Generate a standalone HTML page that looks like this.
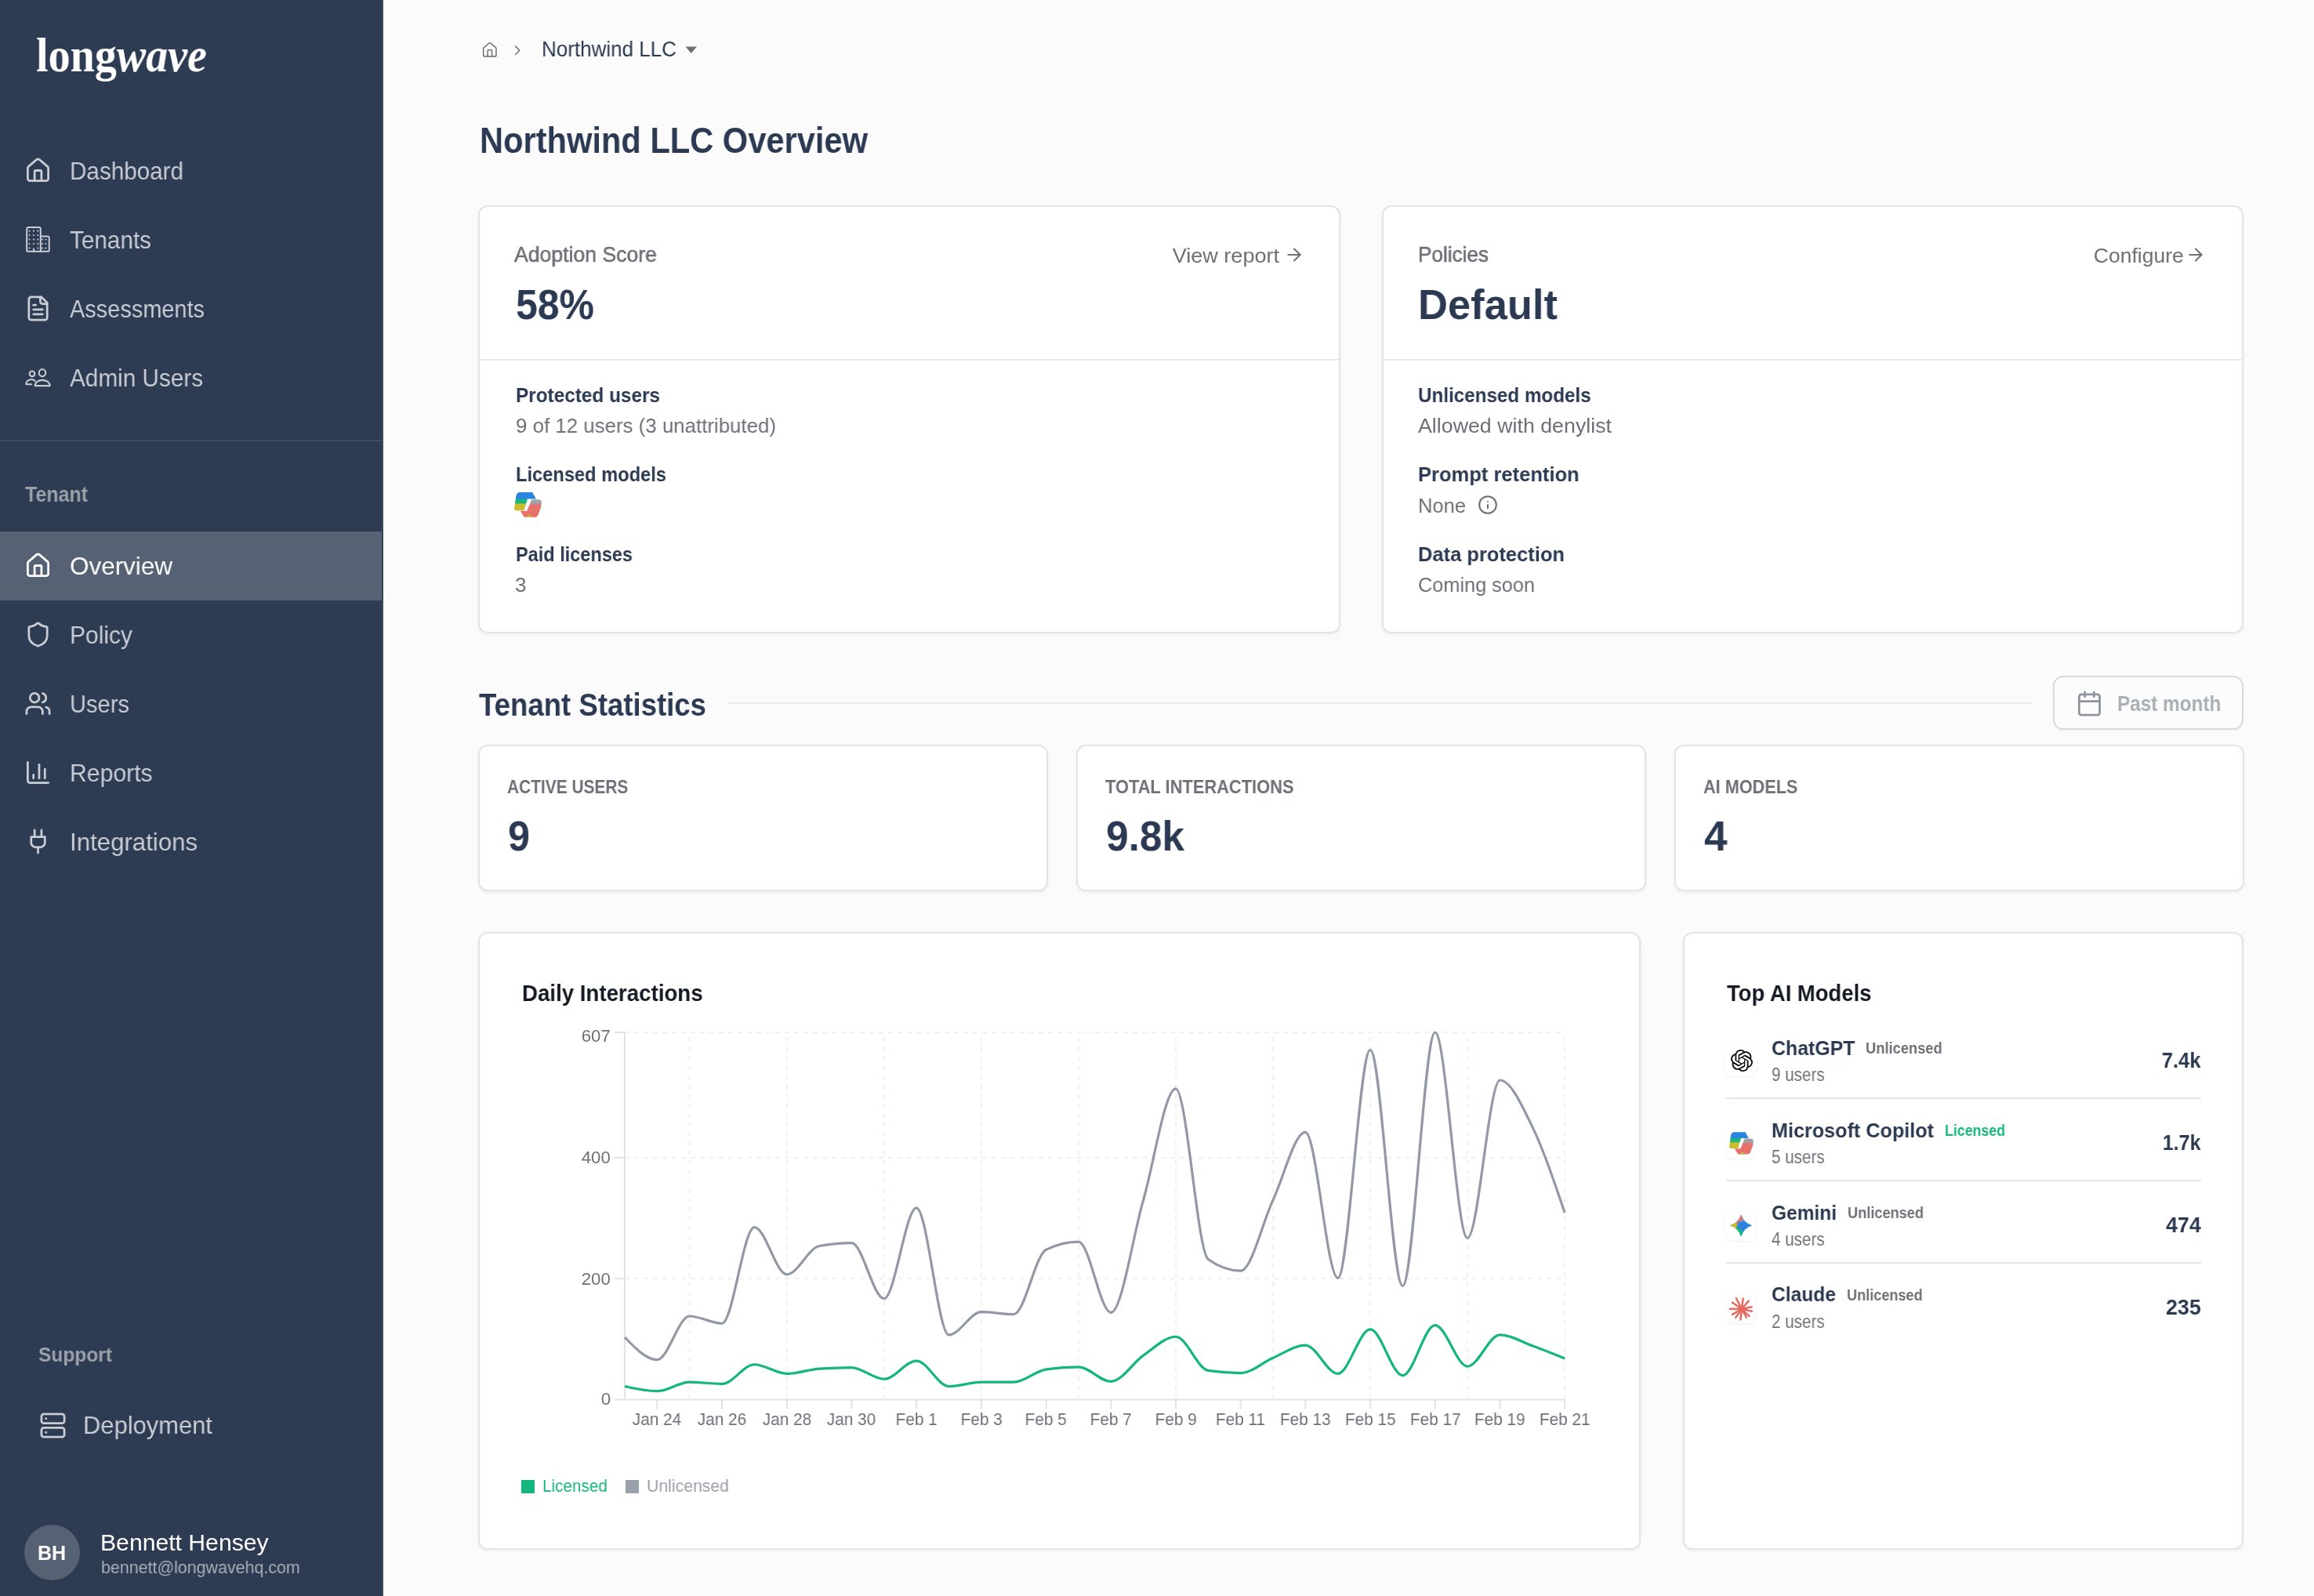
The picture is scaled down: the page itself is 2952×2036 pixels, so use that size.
<!DOCTYPE html>
<html><head><meta charset="utf-8"><title>Northwind LLC Overview</title>
<style>
html,body{margin:0;padding:0;width:2952px;height:2036px;overflow:hidden;background:#fbfbfb;}
.a{position:absolute;display:block;}
.t{white-space:nowrap;will-change:transform;}
@media (max-width: 2200px) { html { zoom: 0.5; } }
body{font-family:"Liberation Sans", sans-serif;position:relative;}
</style></head><body>
<div class="a" style="left:0px;top:0px;width:489px;height:2036px;background:#2d3b53;border-radius:0px;"></div><div class="a" style="left:487px;top:0px;width:2px;height:2036px;background:#3d4a5e;border-radius:0px;"></div><svg class="a" style="left:31px;top:200.0px;" width="35" height="35" viewBox="0 0 24 24"><g fill="none" stroke="#c9ccd2" stroke-width="1.9" stroke-linecap="round" stroke-linejoin="round"><path d="M15 21v-8a1 1 0 0 0-1-1h-4a1 1 0 0 0-1 1v8"/><path d="M3 10a2 2 0 0 1 .709-1.528l7-5.999a2 2 0 0 1 2.582 0l7 5.999A2 2 0 0 1 21 10v9a2 2 0 0 1-2 2H5a2 2 0 0 1-2-2z"/></g></svg><svg class="a" style="left:29px;top:284px;" width="40" height="40" viewBox="0 0 40 40"><g fill="none" stroke="#c9ccd2" stroke-width="2.0" stroke-linejoin="round" stroke-linecap="round"><path d="M6.2 36.7 a1 1 0 0 1 -1 -1 V8.1 a2 2 0 0 1 2 -2 H20.8 a2 2 0 0 1 2 2 V17.5 H31.7 a2 2 0 0 1 2 2 V35.7 a1 1 0 0 1 -1 1 Z"/><path d="M22.8 17.5 V36.7"/><path d="M14 33.2 V36.7"/></g><g fill="#c9ccd2"><circle cx="8.5" cy="10.6" r="1.05"/><circle cx="8.5" cy="16" r="1.05"/><circle cx="8.5" cy="21.5" r="1.05"/><circle cx="8.5" cy="27" r="1.05"/><circle cx="8.5" cy="32.5" r="1.05"/><circle cx="14" cy="10.6" r="1.05"/><circle cx="14" cy="16" r="1.05"/><circle cx="14" cy="21.5" r="1.05"/><circle cx="14" cy="27" r="1.05"/><circle cx="19.3" cy="10.6" r="1.05"/><circle cx="19.3" cy="16" r="1.05"/><circle cx="19.3" cy="21.5" r="1.05"/><circle cx="19.3" cy="27" r="1.05"/><circle cx="19.3" cy="32.5" r="1.05"/><circle cx="25.3" cy="21.5" r="1.05"/><circle cx="25.3" cy="27" r="1.05"/><circle cx="25.3" cy="32.5" r="1.05"/><circle cx="29.4" cy="21.5" r="1.05"/><circle cx="29.4" cy="27" r="1.05"/><circle cx="29.4" cy="32.5" r="1.05"/></g></svg><svg class="a" style="left:31px;top:376.0px;" width="35" height="35" viewBox="0 0 24 24"><g fill="none" stroke="#c9ccd2" stroke-width="1.9" stroke-linecap="round" stroke-linejoin="round"><path d="M15 2H6a2 2 0 0 0-2 2v16a2 2 0 0 0 2 2h12a2 2 0 0 0 2-2V7Z"/><path d="M14 2v4a2 2 0 0 0 2 2h4"/><path d="M10 9H8"/><path d="M16 13H8"/><path d="M16 17H8"/></g></svg><svg class="a" style="left:29px;top:458px;" width="40" height="40" viewBox="0 0 40 40"><g fill="none" stroke="#c9ccd2" stroke-width="2.1" stroke-linecap="round" stroke-linejoin="round"><circle cx="12" cy="18.8" r="3.3"/><ellipse cx="25" cy="17.6" rx="4.2" ry="4.6"/><path d="M11 32.3 H4.4 A6.6 5.9 0 0 1 15.8 28"/><path d="M15.6 34.1 H34.7 A9.55 7.2 0 0 0 15.6 34.1 Z"/></g></svg><div class="a" style="left:0px;top:561px;width:488px;height:2px;background:#3e4b61;border-radius:0px;"></div><div class="a" style="left:0px;top:678px;width:487px;height:88px;background:#566274;border-radius:0px;"></div><div class="a" style="left:487px;top:678px;width:2px;height:88px;background:#37445a;border-radius:0px;"></div><svg class="a" style="left:31px;top:704.0px;" width="35" height="35" viewBox="0 0 24 24"><g fill="none" stroke="#ffffff" stroke-width="1.9" stroke-linecap="round" stroke-linejoin="round"><path d="M15 21v-8a1 1 0 0 0-1-1h-4a1 1 0 0 0-1 1v8"/><path d="M3 10a2 2 0 0 1 .709-1.528l7-5.999a2 2 0 0 1 2.582 0l7 5.999A2 2 0 0 1 21 10v9a2 2 0 0 1-2 2H5a2 2 0 0 1-2-2z"/></g></svg><svg class="a" style="left:31px;top:792.0px;" width="35" height="35" viewBox="0 0 24 24"><g fill="none" stroke="#c9ccd2" stroke-width="1.9" stroke-linecap="round" stroke-linejoin="round"><path d="M20 13c0 5-3.5 7.5-7.66 8.950a1 1 0 0 1-.67-.01C7.5 20.5 4 18 4 13V6a1 1 0 0 1 1-1c2 0 4.5-1.2 6.240-2.720a1.170 1.170 0 0 1 1.520 0C14.510 3.810 17 5 19 5a1 1 0 0 1 1 1z"/></g></svg><svg class="a" style="left:31px;top:880.0px;" width="35" height="35" viewBox="0 0 24 24"><g fill="none" stroke="#c9ccd2" stroke-width="1.9" stroke-linecap="round" stroke-linejoin="round"><path d="M16 21v-2a4 4 0 0 0-4-4H6a4 4 0 0 0-4 4v2"/><circle cx="9" cy="7" r="4"/><path d="M22 21v-2a4 4 0 0 0-3-3.870"/><path d="M16 3.130a4 4 0 0 1 0 7.750"/></g></svg><svg class="a" style="left:31px;top:968.0px;" width="35" height="35" viewBox="0 0 24 24"><g fill="none" stroke="#c9ccd2" stroke-width="1.9" stroke-linecap="round" stroke-linejoin="round"><path d="M3 3v16a2 2 0 0 0 2 2h16"/><path d="M18 17V9"/><path d="M13 17V5"/><path d="M8 17v-3"/></g></svg><svg class="a" style="left:31px;top:1056.0px;" width="35" height="35" viewBox="0 0 24 24"><g fill="none" stroke="#c9ccd2" stroke-width="1.9" stroke-linecap="round" stroke-linejoin="round"><path d="M12 22v-5"/><path d="M9 8V2"/><path d="M15 8V2"/><path d="M18 8v5a4 4 0 0 1-4 4h-4a4 4 0 0 1-4-4V8Z"/></g></svg><svg class="a" style="left:49.5px;top:1800.5px;" width="35" height="35" viewBox="0 0 24 24"><g fill="none" stroke="#c9ccd2" stroke-width="1.9" stroke-linecap="round" stroke-linejoin="round"><rect width="20" height="8" x="2" y="2" rx="2" ry="2"/><rect width="20" height="8" x="2" y="14" rx="2" ry="2"/><line x1="6" x2="6.01" y1="6" y2="6"/><line x1="6" x2="6.01" y1="18" y2="18"/></g></svg><div class="a" style="left:30.5px;top:1944.8px;width:71.5px;height:71.5px;background:#566274;border-radius:36px;"></div><svg class="a" style="left:613.9px;top:52.5px;" width="21.7" height="21.7" viewBox="0 0 24 24"><g fill="none" stroke="#6d7077" stroke-width="1.7" stroke-linecap="round" stroke-linejoin="round"><path d="M15 21v-8a1 1 0 0 0-1-1h-4a1 1 0 0 0-1 1v8"/><path d="M3 10a2 2 0 0 1 .709-1.528l7-5.999a2 2 0 0 1 2.582 0l7 5.999A2 2 0 0 1 21 10v9a2 2 0 0 1-2 2H5a2 2 0 0 1-2-2z"/></g></svg><svg class="a" style="left:650.3px;top:53.6px;" width="20.6" height="20.6" viewBox="0 0 24 24"><g fill="none" stroke="#6d7077" stroke-width="1.75" stroke-linecap="round" stroke-linejoin="round"><path d="m9 18 6-6-6-6"/></g></svg><svg class="a" style="left:874px;top:59px;" width="16" height="10" viewBox="0 0 16 10"><path d="M0.5 0.5 H15 L7.75 9 Z" fill="#6d7077"/></svg><div class="a" style="left:610px;top:262px;width:1100px;height:546px;background:#ffffff;border-radius:12px;box-sizing:border-box;border:2px solid #e4e4e4;box-shadow:0 2px 4px rgba(0,0,0,0.05);"></div><div class="a" style="left:612px;top:458px;width:1096px;height:2px;background:#e8e8e8;border-radius:0px;"></div><svg class="a" style="left:1637.5px;top:312px;" width="26" height="26" viewBox="0 0 24 24"><g fill="none" stroke="#6d7077" stroke-width="1.9" stroke-linecap="round" stroke-linejoin="round"><path d="M5 12h14"/><path d="m12 5 7 7-7 7"/></g></svg><svg class="a" style="left:656px;top:628.3px;" width="35" height="32" viewBox="0 0 35 32"><defs><linearGradient id="cpl" gradientUnits="userSpaceOnUse" x1="0" y1="0" x2="0" y2="23.3"><stop offset="0" stop-color="#2a84e0"/><stop offset="0.33" stop-color="#2a84e0"/><stop offset="0.42" stop-color="#16b87a"/><stop offset="0.58" stop-color="#16b87a"/><stop offset="0.66" stop-color="#cdbb2e"/><stop offset="1" stop-color="#cdbb2e"/></linearGradient><linearGradient id="cpr" gradientUnits="userSpaceOnUse" x1="0" y1="9.2" x2="0" y2="31.8"><stop offset="0" stop-color="#9ea3ad"/><stop offset="0.18" stop-color="#9ea3ad"/><stop offset="0.34" stop-color="#e8716b"/><stop offset="1" stop-color="#e8716b"/></linearGradient></defs><path d="M7.2,0 H23.2 L27.9,8.6 H17 L12.5,23.3 H2.6 Q-0.2,23.3 0.2,20.2 L2.2,5.2 Q3.2,0 7.2,0 Z" fill="url(#cpl)"/><path d="M22.2,9.2 H30.8 Q35.2,9.2 34.8,13.4 L33.8,19.9 L30.6,28.4 Q29.4,31.8 26.2,31.8 H12.8 L7.8,23.7 H16.3 Z" fill="url(#cpr)"/><path d="M16,31.8 L19,27.6 L23,31.8 Z" fill="#cdbb2e" opacity="0.85"/></svg><div class="a" style="left:1763px;top:262px;width:1099px;height:546px;background:#ffffff;border-radius:12px;box-sizing:border-box;border:2px solid #e4e4e4;box-shadow:0 2px 4px rgba(0,0,0,0.05);"></div><div class="a" style="left:1765px;top:458px;width:1095px;height:2px;background:#e8e8e8;border-radius:0px;"></div><svg class="a" style="left:2787.5px;top:312px;" width="26" height="26" viewBox="0 0 24 24"><g fill="none" stroke="#6d7077" stroke-width="1.9" stroke-linecap="round" stroke-linejoin="round"><path d="M5 12h14"/><path d="m12 5 7 7-7 7"/></g></svg><svg class="a" style="left:1885px;top:631px;" width="26" height="26" viewBox="0 0 24 24"><g fill="none" stroke="#6d7077" stroke-width="1.9" stroke-linecap="round" stroke-linejoin="round"><circle cx="12" cy="12" r="10"/><path d="M12 16v-4"/><path d="M12 8h.01"/></g></svg><div class="a" style="left:929px;top:896px;width:1664px;height:2px;background:#ebebeb;border-radius:0px;"></div><div class="a" style="left:2619px;top:862px;width:243px;height:69px;background:#fcfcfc;border-radius:13px;box-sizing:border-box;border:2px solid #d9dadd;box-shadow:0 1px 2px rgba(0,0,0,0.04);"></div><svg class="a" style="left:2648px;top:880px;" width="35" height="35" viewBox="0 0 24 24"><g fill="none" stroke="#8f959e" stroke-width="1.9" stroke-linecap="round" stroke-linejoin="round"><path d="M8 2v4"/><path d="M16 2v4"/><rect width="18" height="18" x="3" y="4" rx="2"/><path d="M3 10h18"/></g></svg><div class="a" style="left:610px;top:950px;width:727px;height:187px;background:#ffffff;border-radius:12px;box-sizing:border-box;border:2px solid #e4e4e4;box-shadow:0 2px 4px rgba(0,0,0,0.05);"></div><div class="a" style="left:1373px;top:950px;width:727px;height:187px;background:#ffffff;border-radius:12px;box-sizing:border-box;border:2px solid #e4e4e4;box-shadow:0 2px 4px rgba(0,0,0,0.05);"></div><div class="a" style="left:2136px;top:950px;width:727px;height:187px;background:#ffffff;border-radius:12px;box-sizing:border-box;border:2px solid #e4e4e4;box-shadow:0 2px 4px rgba(0,0,0,0.05);"></div><div class="a" style="left:610px;top:1189px;width:1483px;height:788px;background:#ffffff;border-radius:12px;box-sizing:border-box;border:2px solid #e4e4e4;box-shadow:0 2px 4px rgba(0,0,0,0.05);"></div><svg class="a" style="left:0;top:0" width="2952" height="2036" viewBox="0 0 2952 2036"><line x1="797.0" y1="1631.1" x2="1996.2" y2="1631.1" stroke="#f0f0f0" stroke-width="2" stroke-dasharray="6 6"/><line x1="797.0" y1="1476.8" x2="1996.2" y2="1476.8" stroke="#f0f0f0" stroke-width="2" stroke-dasharray="6 6"/><line x1="797.0" y1="1317.0" x2="1996.2" y2="1317.0" stroke="#f0f0f0" stroke-width="2" stroke-dasharray="6 6"/><line x1="879.7" y1="1785.5" x2="879.7" y2="1317.0" stroke="#f0f0f0" stroke-width="2" stroke-dasharray="6 6"/><line x1="1003.8" y1="1785.5" x2="1003.8" y2="1317.0" stroke="#f0f0f0" stroke-width="2" stroke-dasharray="6 6"/><line x1="1127.8" y1="1785.5" x2="1127.8" y2="1317.0" stroke="#f0f0f0" stroke-width="2" stroke-dasharray="6 6"/><line x1="1251.8" y1="1785.5" x2="1251.8" y2="1317.0" stroke="#f0f0f0" stroke-width="2" stroke-dasharray="6 6"/><line x1="1375.9" y1="1785.5" x2="1375.9" y2="1317.0" stroke="#f0f0f0" stroke-width="2" stroke-dasharray="6 6"/><line x1="1500.0" y1="1785.5" x2="1500.0" y2="1317.0" stroke="#f0f0f0" stroke-width="2" stroke-dasharray="6 6"/><line x1="1624.0" y1="1785.5" x2="1624.0" y2="1317.0" stroke="#f0f0f0" stroke-width="2" stroke-dasharray="6 6"/><line x1="1748.1" y1="1785.5" x2="1748.1" y2="1317.0" stroke="#f0f0f0" stroke-width="2" stroke-dasharray="6 6"/><line x1="1872.1" y1="1785.5" x2="1872.1" y2="1317.0" stroke="#f0f0f0" stroke-width="2" stroke-dasharray="6 6"/><line x1="1996.2" y1="1785.5" x2="1996.2" y2="1317.0" stroke="#f0f0f0" stroke-width="2" stroke-dasharray="6 6"/><line x1="797.0" y1="1316.0" x2="797.0" y2="1786.5" stroke="#e2e3e3" stroke-width="2"/><line x1="796.0" y1="1785.5" x2="1997.2" y2="1785.5" stroke="#e2e3e3" stroke-width="2"/><line x1="784.0" y1="1785.5" x2="797.0" y2="1785.5" stroke="#e2e3e3" stroke-width="2"/><line x1="784.0" y1="1631.1" x2="797.0" y2="1631.1" stroke="#e2e3e3" stroke-width="2"/><line x1="784.0" y1="1476.8" x2="797.0" y2="1476.8" stroke="#e2e3e3" stroke-width="2"/><line x1="784.0" y1="1317.0" x2="797.0" y2="1317.0" stroke="#e2e3e3" stroke-width="2"/><line x1="838.4" y1="1785.5" x2="838.4" y2="1797.5" stroke="#e2e3e3" stroke-width="2"/><line x1="921.0" y1="1785.5" x2="921.0" y2="1797.5" stroke="#e2e3e3" stroke-width="2"/><line x1="1003.8" y1="1785.5" x2="1003.8" y2="1797.5" stroke="#e2e3e3" stroke-width="2"/><line x1="1086.5" y1="1785.5" x2="1086.5" y2="1797.5" stroke="#e2e3e3" stroke-width="2"/><line x1="1169.2" y1="1785.5" x2="1169.2" y2="1797.5" stroke="#e2e3e3" stroke-width="2"/><line x1="1251.8" y1="1785.5" x2="1251.8" y2="1797.5" stroke="#e2e3e3" stroke-width="2"/><line x1="1334.6" y1="1785.5" x2="1334.6" y2="1797.5" stroke="#e2e3e3" stroke-width="2"/><line x1="1417.2" y1="1785.5" x2="1417.2" y2="1797.5" stroke="#e2e3e3" stroke-width="2"/><line x1="1500.0" y1="1785.5" x2="1500.0" y2="1797.5" stroke="#e2e3e3" stroke-width="2"/><line x1="1582.7" y1="1785.5" x2="1582.7" y2="1797.5" stroke="#e2e3e3" stroke-width="2"/><line x1="1665.3" y1="1785.5" x2="1665.3" y2="1797.5" stroke="#e2e3e3" stroke-width="2"/><line x1="1748.1" y1="1785.5" x2="1748.1" y2="1797.5" stroke="#e2e3e3" stroke-width="2"/><line x1="1830.8" y1="1785.5" x2="1830.8" y2="1797.5" stroke="#e2e3e3" stroke-width="2"/><line x1="1913.5" y1="1785.5" x2="1913.5" y2="1797.5" stroke="#e2e3e3" stroke-width="2"/><line x1="1996.2" y1="1785.5" x2="1996.2" y2="1797.5" stroke="#e2e3e3" stroke-width="2"/><path d="M797.00,1706.00C810.78,1720.28 824.57,1734.56 838.35,1734.56C852.13,1734.56 865.92,1678.99 879.70,1678.99C893.48,1678.99 907.27,1688.25 921.05,1688.25C934.83,1688.25 948.62,1565.54 962.40,1565.54C976.18,1565.54 989.97,1625.74 1003.75,1625.74C1017.53,1625.74 1031.32,1592.04 1045.10,1589.46C1058.88,1586.89 1072.67,1585.60 1086.45,1585.60C1100.23,1585.60 1114.02,1656.61 1127.80,1656.61C1141.58,1656.61 1155.37,1540.84 1169.15,1540.84C1182.93,1540.84 1196.72,1702.92 1210.50,1702.92C1224.28,1702.92 1238.07,1673.59 1251.85,1673.59C1265.63,1673.59 1279.42,1676.68 1293.20,1676.68C1306.98,1676.68 1320.77,1600.78 1334.55,1594.09C1348.33,1587.40 1362.12,1584.06 1375.90,1584.06C1389.68,1584.06 1403.47,1674.36 1417.25,1674.36C1431.03,1674.36 1444.82,1578.40 1458.60,1530.81C1472.38,1483.21 1486.17,1388.79 1499.95,1388.79C1513.73,1388.79 1527.52,1596.67 1541.30,1606.44C1555.08,1616.22 1568.87,1621.11 1582.65,1621.11C1596.43,1621.11 1610.22,1560.26 1624.00,1530.81C1637.78,1501.35 1651.57,1444.36 1665.35,1444.36C1679.13,1444.36 1692.92,1630.37 1706.70,1630.37C1720.48,1630.37 1734.27,1339.40 1748.05,1339.40C1761.83,1339.40 1775.62,1640.40 1789.40,1640.40C1803.18,1640.40 1816.97,1317.02 1830.75,1317.02C1844.53,1317.02 1858.32,1579.43 1872.10,1579.43C1885.88,1579.43 1899.67,1377.99 1913.45,1377.99C1927.23,1377.99 1941.02,1409.25 1954.80,1437.42C1968.58,1465.59 1982.37,1506.30 1996.15,1547.01" fill="none" stroke="#9298a5" stroke-width="3.2" stroke-linejoin="round"/><path d="M797.00,1768.52C810.78,1771.61 824.57,1774.69 838.35,1774.69C852.13,1774.69 865.92,1763.12 879.70,1763.12C893.48,1763.12 907.27,1765.43 921.05,1765.43C934.83,1765.43 948.62,1740.74 962.40,1740.74C976.18,1740.74 989.97,1752.31 1003.75,1752.31C1017.53,1752.31 1031.32,1747.17 1045.10,1746.14C1058.88,1745.11 1072.67,1744.59 1086.45,1744.59C1100.23,1744.59 1114.02,1759.26 1127.80,1759.26C1141.58,1759.26 1155.37,1736.10 1169.15,1736.10C1182.93,1736.10 1196.72,1768.52 1210.50,1768.52C1224.28,1768.52 1238.07,1763.12 1251.85,1763.12C1265.63,1763.12 1279.42,1763.12 1293.20,1763.12C1306.98,1763.12 1320.77,1748.97 1334.55,1746.91C1348.33,1744.85 1362.12,1743.82 1375.90,1743.82C1389.68,1743.82 1403.47,1762.35 1417.25,1762.35C1431.03,1762.35 1444.82,1738.68 1458.60,1729.16C1472.38,1719.64 1486.17,1705.23 1499.95,1705.23C1513.73,1705.23 1527.52,1746.40 1541.30,1748.45C1555.08,1750.51 1568.87,1751.54 1582.65,1751.54C1596.43,1751.54 1610.22,1738.16 1624.00,1732.25C1637.78,1726.33 1651.57,1716.04 1665.35,1716.04C1679.13,1716.04 1692.92,1752.31 1706.70,1752.31C1720.48,1752.31 1734.27,1695.97 1748.05,1695.97C1761.83,1695.97 1775.62,1754.63 1789.40,1754.63C1803.18,1754.63 1816.97,1690.57 1830.75,1690.57C1844.53,1690.57 1858.32,1743.05 1872.10,1743.05C1885.88,1743.05 1899.67,1702.92 1913.45,1702.92C1927.23,1702.92 1941.02,1711.79 1954.80,1716.81C1968.58,1721.83 1982.37,1727.42 1996.15,1733.02" fill="none" stroke="#13b67d" stroke-width="3.2" stroke-linejoin="round"/></svg><div class="a" style="left:665px;top:1888px;width:17px;height:17px;background:#13b67d;border-radius:0px;"></div><div class="a" style="left:798px;top:1888px;width:17px;height:17px;background:#9aa0ab;border-radius:0px;"></div><div class="a" style="left:2147px;top:1189px;width:715px;height:788px;background:#ffffff;border-radius:12px;box-sizing:border-box;border:2px solid #e4e4e4;box-shadow:0 2px 4px rgba(0,0,0,0.05);"></div><div class="a" style="left:2201px;top:1333.0px;width:40px;height:40px;background:#ffffff;border-radius:9px;box-shadow:0 1px 3px rgba(0,0,0,0.07);"></div><svg class="a" style="left:2207.5px;top:1339.0px;" width="28" height="28" viewBox="0 0 24 24"><path fill="#0d0d0d" d="M22.2819 9.8211a5.9847 5.9847 0 0 0-.5157-4.9108 6.0462 6.0462 0 0 0-6.5098-2.9A6.0651 6.0651 0 0 0 4.9807 4.1818a5.9847 5.9847 0 0 0-3.9977 2.9 6.0462 6.0462 0 0 0 .7427 7.0966 5.98 5.98 0 0 0 .511 4.9107 6.051 6.051 0 0 0 6.5146 2.9001A5.9847 5.9847 0 0 0 13.2599 24a6.0557 6.0557 0 0 0 5.7718-4.2058 5.9894 5.9894 0 0 0 3.9977-2.9001 6.0557 6.0557 0 0 0-.7475-7.0729zm-9.022 12.6081a4.4755 4.4755 0 0 1-2.8764-1.0408l.1419-.0804 4.7783-2.7582a.7948.7948 0 0 0 .3927-.6813v-6.7369l2.02 1.1686a.071.071 0 0 1 .038.052v5.5826a4.504 4.504 0 0 1-4.4945 4.4944zm-9.6607-4.1254a4.4708 4.4708 0 0 1-.5346-3.0137l.142.0852 4.783 2.7582a.7712.7712 0 0 0 .7806 0l5.8428-3.3685v2.3324a.0804.0804 0 0 1-.0332.0615L9.74 19.9502a4.4992 4.4992 0 0 1-6.1408-1.6464zM2.3408 7.8956a4.485 4.485 0 0 1 2.3655-1.9728V11.6a.7664.7664 0 0 0 .3879.6765l5.8144 3.3543-2.0201 1.1685a.0757.0757 0 0 1-.071 0l-4.8303-2.7865A4.504 4.504 0 0 1 2.3408 7.872zm16.5963 3.8558L13.1038 8.364 15.1192 7.2a.0757.0757 0 0 1 .071 0l4.8303 2.7913a4.4944 4.4944 0 0 1-.6765 8.1042v-5.6772a.79.79 0 0 0-.407-.667zm2.0107-3.0231l-.142-.0852-4.7735-2.7818a.7759.7759 0 0 0-.7854 0L9.409 9.2297V6.8974a.0662.0662 0 0 1 .0284-.0615l4.8303-2.7866a4.4992 4.4992 0 0 1 6.6802 4.66zM8.3065 12.863l-2.02-1.1638a.0804.0804 0 0 1-.038-.0567V6.0742a4.4992 4.4992 0 0 1 7.3757-3.4537l-.142.0805L8.704 5.459a.7948.7948 0 0 0-.3927.6813zm1.0976-2.3654l2.602-1.4998 2.6069 1.4998v2.9994l-2.5974 1.4997-2.6067-1.4997Z"/></svg><div class="a" style="left:2202px;top:1400.0px;width:606px;height:2px;background:#e6e6e6;border-radius:0px;"></div><div class="a" style="left:2201px;top:1437.9px;width:40px;height:40px;background:#ffffff;border-radius:9px;box-shadow:0 1px 3px rgba(0,0,0,0.07);"></div><svg class="a" style="left:2206px;top:1444px;overflow:visible" width="31" height="29" viewBox="0 0 35 32"><defs><linearGradient id="cpl2" gradientUnits="userSpaceOnUse" x1="0" y1="0" x2="0" y2="23.3"><stop offset="0" stop-color="#2a84e0"/><stop offset="0.33" stop-color="#2a84e0"/><stop offset="0.42" stop-color="#16b87a"/><stop offset="0.58" stop-color="#16b87a"/><stop offset="0.66" stop-color="#cdbb2e"/><stop offset="1" stop-color="#cdbb2e"/></linearGradient><linearGradient id="cpr2" gradientUnits="userSpaceOnUse" x1="0" y1="9.2" x2="0" y2="31.8"><stop offset="0" stop-color="#9ea3ad"/><stop offset="0.18" stop-color="#9ea3ad"/><stop offset="0.34" stop-color="#e8716b"/><stop offset="1" stop-color="#e8716b"/></linearGradient></defs><path d="M7.2,0 H23.2 L27.9,8.6 H17 L12.5,23.3 H2.6 Q-0.2,23.3 0.2,20.2 L2.2,5.2 Q3.2,0 7.2,0 Z" fill="url(#cpl2)"/><path d="M22.2,9.2 H30.8 Q35.2,9.2 34.8,13.4 L33.8,19.9 L30.6,28.4 Q29.4,31.8 26.2,31.8 H12.8 L7.8,23.7 H16.3 Z" fill="url(#cpr2)"/><path d="M16,31.8 L19,27.6 L23,31.8 Z" fill="#cdbb2e" opacity="0.85"/></svg><div class="a" style="left:2202px;top:1504.9px;width:606px;height:2px;background:#e6e6e6;border-radius:0px;"></div><div class="a" style="left:2201px;top:1542.8px;width:40px;height:40px;background:#ffffff;border-radius:9px;box-shadow:0 1px 3px rgba(0,0,0,0.07);"></div><svg class="a" style="left:2207.3px;top:1549.3px;" width="28.3" height="28.6" viewBox="0 0 28 28"><defs><clipPath id="gstar"><path d="M14 0 Q17.2 10.8 28 14 Q17.2 17.2 14 28 Q10.8 17.2 0 14 Q10.8 10.8 14 0 Z"/></clipPath></defs><g clip-path="url(#gstar)"><rect x="0" y="0" width="28" height="28" fill="#2a84e0"/><polygon points="0,0 22,0 17,5 7,12 0,12" fill="#e8706a"/><polygon points="17,5 19.5,7.5 11,10.5 9.2,15.5 7.5,15.5 7,12" fill="#8d929c"/><rect x="0" y="10.5" width="8.3" height="7.5" fill="#cdbb2e"/><polygon points="8.6,14.8 16.4,22.2 16.4,28 0,28 0,18 8.3,18" fill="#16b87a"/></g></svg><div class="a" style="left:2202px;top:1609.8px;width:606px;height:2px;background:#e6e6e6;border-radius:0px;"></div><div class="a" style="left:2201px;top:1647.7px;width:40px;height:40px;background:#ffffff;border-radius:9px;box-shadow:0 1px 3px rgba(0,0,0,0.07);"></div><svg class="a" style="left:2208.3px;top:1655.7px;overflow:visible" width="28" height="28" viewBox="0 0 28 28"><g stroke="#e46c63" stroke-linecap="round"><line x1="12.00" y1="13.97" x2="-1.20" y2="13.73" stroke-width="2.5"/><line x1="12.36" y1="12.85" x2="2.04" y2="5.63" stroke-width="2.5"/><line x1="13.09" y1="12.22" x2="6.92" y2="0.10" stroke-width="2.5"/><line x1="14.24" y1="12.01" x2="15.66" y2="0.50" stroke-width="2.5"/><line x1="15.29" y1="12.47" x2="22.74" y2="3.58" stroke-width="2.5"/><line x1="15.96" y1="13.58" x2="26.62" y2="11.32" stroke-width="2.5"/><line x1="15.96" y1="14.42" x2="26.91" y2="16.74" stroke-width="2.5"/><line x1="15.46" y1="15.36" x2="23.58" y2="22.93" stroke-width="2.5"/><line x1="14.97" y1="15.75" x2="19.96" y2="24.76" stroke-width="2.5"/><line x1="13.76" y1="15.99" x2="12.34" y2="27.50" stroke-width="2.5"/><line x1="12.82" y1="15.62" x2="6.24" y2="24.68" stroke-width="2.5"/><line x1="12.27" y1="15.00" x2="2.05" y2="20.90" stroke-width="2.5"/></g><circle cx="14" cy="14" r="4.6" fill="#e46c63"/></svg>
<span class="a t" style="left:46.00px;top:38.50px;font-family:'Liberation Serif', serif;font-size:62px;font-weight:700;color:#ffffff;line-height:62px;font-style:normal;transform:scaleX(0.9042);transform-origin:left top;">long<i>wave</i></span><span class="a t" style="left:88.50px;top:201.91px;font-family:'Liberation Sans', sans-serif;font-size:32px;font-weight:400;color:#c9ccd2;line-height:32px;font-style:normal;transform:scaleX(0.9262);transform-origin:left top;">Dashboard</span><span class="a t" style="left:88.50px;top:289.91px;font-family:'Liberation Sans', sans-serif;font-size:32px;font-weight:400;color:#c9ccd2;line-height:32px;font-style:normal;transform:scaleX(0.9279);transform-origin:left top;">Tenants</span><span class="a t" style="left:88.50px;top:377.91px;font-family:'Liberation Sans', sans-serif;font-size:32px;font-weight:400;color:#c9ccd2;line-height:32px;font-style:normal;transform:scaleX(0.9039);transform-origin:left top;">Assessments</span><span class="a t" style="left:88.50px;top:465.91px;font-family:'Liberation Sans', sans-serif;font-size:32px;font-weight:400;color:#c9ccd2;line-height:32px;font-style:normal;transform:scaleX(0.9282);transform-origin:left top;">Admin Users</span><span class="a t" style="left:32.00px;top:618.14px;font-family:'Liberation Sans', sans-serif;font-size:27px;font-weight:700;color:#9ba0a9;line-height:27px;font-style:normal;transform:scaleX(0.9249);transform-origin:left top;">Tenant</span><span class="a t" style="left:88.50px;top:705.91px;font-family:'Liberation Sans', sans-serif;font-size:32px;font-weight:400;color:#ffffff;line-height:32px;font-style:normal;transform:scaleX(0.9823);transform-origin:left top;">Overview</span><span class="a t" style="left:88.50px;top:793.91px;font-family:'Liberation Sans', sans-serif;font-size:32px;font-weight:400;color:#c9ccd2;line-height:32px;font-style:normal;transform:scaleX(0.9372);transform-origin:left top;">Policy</span><span class="a t" style="left:88.50px;top:881.91px;font-family:'Liberation Sans', sans-serif;font-size:32px;font-weight:400;color:#c9ccd2;line-height:32px;font-style:normal;transform:scaleX(0.9095);transform-origin:left top;">Users</span><span class="a t" style="left:88.50px;top:969.91px;font-family:'Liberation Sans', sans-serif;font-size:32px;font-weight:400;color:#c9ccd2;line-height:32px;font-style:normal;transform:scaleX(0.9425);transform-origin:left top;">Reports</span><span class="a t" style="left:88.50px;top:1057.91px;font-family:'Liberation Sans', sans-serif;font-size:32px;font-weight:400;color:#c9ccd2;line-height:32px;font-style:normal;transform:scaleX(0.9748);transform-origin:left top;">Integrations</span><span class="a t" style="left:49.00px;top:1714.99px;font-family:'Liberation Sans', sans-serif;font-size:26px;font-weight:700;color:#9ba0a9;line-height:26px;font-style:normal;transform:scaleX(0.9432);transform-origin:left top;">Support</span><span class="a t" style="left:105.50px;top:1801.91px;font-family:'Liberation Sans', sans-serif;font-size:32px;font-weight:400;color:#c9ccd2;line-height:32px;font-style:normal;transform:scaleX(0.9663);transform-origin:left top;">Deployment</span><span class="a t" style="left:47.95px;top:1968.83px;font-family:'Liberation Sans', sans-serif;font-size:25px;font-weight:700;color:#ffffff;line-height:25px;font-style:normal;transform:scaleX(0.9970);transform-origin:center top;">BH</span><span class="a t" style="left:127.50px;top:1953.10px;font-family:'Liberation Sans', sans-serif;font-size:30px;font-weight:400;color:#ffffff;line-height:30px;font-style:normal;transform:scaleX(1.0052);transform-origin:left top;">Bennett Hensey</span><span class="a t" style="left:129.00px;top:1988.87px;font-family:'Liberation Sans', sans-serif;font-size:22px;font-weight:400;color:#a9afb9;line-height:22px;font-style:normal;transform:scaleX(0.9726);transform-origin:left top;">bennett@longwavehq.com</span><span class="a t" style="left:691.00px;top:50.14px;font-family:'Liberation Sans', sans-serif;font-size:27px;font-weight:400;color:#2b3a52;line-height:27px;font-style:normal;transform:scaleX(0.9631);transform-origin:left top;">Northwind LLC</span><span class="a t" style="left:612.00px;top:156.05px;font-family:'Liberation Sans', sans-serif;font-size:46px;font-weight:700;color:#2b3a52;line-height:46px;font-style:normal;transform:scaleX(0.9050);transform-origin:left top;">Northwind LLC Overview</span><span class="a t" style="left:656.30px;top:312.14px;font-family:'Liberation Sans', sans-serif;font-size:27px;font-weight:400;color:#6d7077;line-height:27px;font-style:normal;-webkit-text-stroke:0.6px #6d7077;transform:scaleX(0.9858);transform-origin:left top;">Adoption Score</span><span class="a t" style="left:1500.97px;top:312.79px;font-family:'Liberation Sans', sans-serif;font-size:26px;font-weight:400;color:#6d7077;line-height:26px;font-style:normal;transform:scaleX(1.0410);transform-origin:right top;">View report</span><span class="a t" style="left:658.00px;top:361.28px;font-family:'Liberation Sans', sans-serif;font-size:54px;font-weight:700;color:#2b3a52;line-height:54px;font-style:normal;transform:scaleX(0.9251);transform-origin:left top;">58%</span><span class="a t" style="left:657.60px;top:490.99px;font-family:'Liberation Sans', sans-serif;font-size:26px;font-weight:700;color:#2b3a52;line-height:26px;font-style:normal;transform:scaleX(0.9362);transform-origin:left top;">Protected users</span><span class="a t" style="left:658.00px;top:530.49px;font-family:'Liberation Sans', sans-serif;font-size:26px;font-weight:400;color:#6d7077;line-height:26px;font-style:normal;transform:scaleX(0.9944);transform-origin:left top;">9 of 12 users (3 unattributed)</span><span class="a t" style="left:657.60px;top:592.49px;font-family:'Liberation Sans', sans-serif;font-size:26px;font-weight:700;color:#2b3a52;line-height:26px;font-style:normal;transform:scaleX(0.9101);transform-origin:left top;">Licensed models</span><span class="a t" style="left:657.60px;top:693.59px;font-family:'Liberation Sans', sans-serif;font-size:26px;font-weight:700;color:#2b3a52;line-height:26px;font-style:normal;transform:scaleX(0.9043);transform-origin:left top;">Paid licenses</span><span class="a t" style="left:657.00px;top:732.99px;font-family:'Liberation Sans', sans-serif;font-size:26px;font-weight:400;color:#6d7077;line-height:26px;font-style:normal;transform:scaleX(1.0022);transform-origin:left top;">3</span><span class="a t" style="left:1809.00px;top:312.14px;font-family:'Liberation Sans', sans-serif;font-size:27px;font-weight:400;color:#6d7077;line-height:27px;font-style:normal;-webkit-text-stroke:0.6px #6d7077;transform:scaleX(0.9673);transform-origin:left top;">Policies</span><span class="a t" style="left:2673.27px;top:312.79px;font-family:'Liberation Sans', sans-serif;font-size:26px;font-weight:400;color:#6d7077;line-height:26px;font-style:normal;transform:scaleX(1.0201);transform-origin:right top;">Configure</span><span class="a t" style="left:1809.00px;top:361.28px;font-family:'Liberation Sans', sans-serif;font-size:54px;font-weight:700;color:#2b3a52;line-height:54px;font-style:normal;transform:scaleX(0.9726);transform-origin:left top;">Default</span><span class="a t" style="left:1809.00px;top:490.99px;font-family:'Liberation Sans', sans-serif;font-size:26px;font-weight:700;color:#2b3a52;line-height:26px;font-style:normal;transform:scaleX(0.9313);transform-origin:left top;">Unlicensed models</span><span class="a t" style="left:1809.00px;top:530.49px;font-family:'Liberation Sans', sans-serif;font-size:26px;font-weight:400;color:#6d7077;line-height:26px;font-style:normal;transform:scaleX(1.0296);transform-origin:left top;">Allowed with denylist</span><span class="a t" style="left:1809.00px;top:592.49px;font-family:'Liberation Sans', sans-serif;font-size:26px;font-weight:700;color:#2b3a52;line-height:26px;font-style:normal;transform:scaleX(0.9821);transform-origin:left top;">Prompt retention</span><span class="a t" style="left:1809.00px;top:631.69px;font-family:'Liberation Sans', sans-serif;font-size:26px;font-weight:400;color:#6d7077;line-height:26px;font-style:normal;transform:scaleX(0.9814);transform-origin:left top;">None</span><span class="a t" style="left:1809.00px;top:693.59px;font-family:'Liberation Sans', sans-serif;font-size:26px;font-weight:700;color:#2b3a52;line-height:26px;font-style:normal;transform:scaleX(0.9807);transform-origin:left top;">Data protection</span><span class="a t" style="left:1809.00px;top:732.99px;font-family:'Liberation Sans', sans-serif;font-size:26px;font-weight:400;color:#6d7077;line-height:26px;font-style:normal;transform:scaleX(0.9726);transform-origin:left top;">Coming soon</span><span class="a t" style="left:611.00px;top:878.73px;font-family:'Liberation Sans', sans-serif;font-size:40px;font-weight:700;color:#2b3a52;line-height:40px;font-style:normal;transform:scaleX(0.9145);transform-origin:left top;">Tenant Statistics</span><span class="a t" style="left:2701.00px;top:884.54px;font-family:'Liberation Sans', sans-serif;font-size:27px;font-weight:700;color:#a9aeb5;line-height:27px;font-style:normal;transform:scaleX(0.9006);transform-origin:left top;">Past month</span><span class="a t" style="left:647.40px;top:992.48px;font-family:'Liberation Sans', sans-serif;font-size:24px;font-weight:700;color:#6d7077;line-height:24px;font-style:normal;transform:scaleX(0.8705);transform-origin:left top;">ACTIVE USERS</span><span class="a t" style="left:647.50px;top:1038.68px;font-family:'Liberation Sans', sans-serif;font-size:54px;font-weight:700;color:#2b3a52;line-height:54px;font-style:normal;transform:scaleX(0.9319);transform-origin:left top;">9</span><span class="a t" style="left:1410.40px;top:992.48px;font-family:'Liberation Sans', sans-serif;font-size:24px;font-weight:700;color:#6d7077;line-height:24px;font-style:normal;transform:scaleX(0.9110);transform-origin:left top;">TOTAL INTERACTIONS</span><span class="a t" style="left:1410.50px;top:1038.68px;font-family:'Liberation Sans', sans-serif;font-size:54px;font-weight:700;color:#2b3a52;line-height:54px;font-style:normal;transform:scaleX(0.9514);transform-origin:left top;">9.8k</span><span class="a t" style="left:2173.40px;top:992.48px;font-family:'Liberation Sans', sans-serif;font-size:24px;font-weight:700;color:#6d7077;line-height:24px;font-style:normal;transform:scaleX(0.9029);transform-origin:left top;">AI MODELS</span><span class="a t" style="left:2173.50px;top:1038.68px;font-family:'Liberation Sans', sans-serif;font-size:54px;font-weight:700;color:#2b3a52;line-height:54px;font-style:normal;transform:scaleX(0.9818);transform-origin:left top;">4</span><span class="a t" style="left:665.70px;top:1251.60px;font-family:'Liberation Sans', sans-serif;font-size:30px;font-weight:700;color:#141a24;line-height:30px;font-style:normal;transform:scaleX(0.9221);transform-origin:left top;">Daily Interactions</span><span class="a t" style="left:742.28px;top:1311.17px;font-family:'Liberation Sans', sans-serif;font-size:22px;font-weight:400;color:#6d7077;line-height:22px;font-style:normal;transform:scaleX(1.0077);transform-origin:right top;">607</span><span class="a t" style="left:742.28px;top:1466.17px;font-family:'Liberation Sans', sans-serif;font-size:22px;font-weight:400;color:#6d7077;line-height:22px;font-style:normal;transform:scaleX(1.0077);transform-origin:right top;">400</span><span class="a t" style="left:742.28px;top:1620.87px;font-family:'Liberation Sans', sans-serif;font-size:22px;font-weight:400;color:#6d7077;line-height:22px;font-style:normal;transform:scaleX(1.0077);transform-origin:right top;">200</span><span class="a t" style="left:766.75px;top:1774.27px;font-family:'Liberation Sans', sans-serif;font-size:22px;font-weight:400;color:#6d7077;line-height:22px;font-style:normal;transform:scaleX(1.0204);transform-origin:right top;">0</span><span class="a t" style="left:805.32px;top:1800.17px;font-family:'Liberation Sans', sans-serif;font-size:22px;font-weight:400;color:#6d7077;line-height:22px;font-style:normal;transform:scaleX(0.9460);transform-origin:center top;">Jan 24</span><span class="a t" style="left:888.02px;top:1800.17px;font-family:'Liberation Sans', sans-serif;font-size:22px;font-weight:400;color:#6d7077;line-height:22px;font-style:normal;transform:scaleX(0.9460);transform-origin:center top;">Jan 26</span><span class="a t" style="left:970.72px;top:1800.17px;font-family:'Liberation Sans', sans-serif;font-size:22px;font-weight:400;color:#6d7077;line-height:22px;font-style:normal;transform:scaleX(0.9460);transform-origin:center top;">Jan 28</span><span class="a t" style="left:1053.42px;top:1800.17px;font-family:'Liberation Sans', sans-serif;font-size:22px;font-weight:400;color:#6d7077;line-height:22px;font-style:normal;transform:scaleX(0.9460);transform-origin:center top;">Jan 30</span><span class="a t" style="left:1141.02px;top:1800.17px;font-family:'Liberation Sans', sans-serif;font-size:22px;font-weight:400;color:#6d7077;line-height:22px;font-style:normal;transform:scaleX(0.9460);transform-origin:center top;">Feb 1</span><span class="a t" style="left:1223.72px;top:1800.17px;font-family:'Liberation Sans', sans-serif;font-size:22px;font-weight:400;color:#6d7077;line-height:22px;font-style:normal;transform:scaleX(0.9460);transform-origin:center top;">Feb 3</span><span class="a t" style="left:1306.42px;top:1800.17px;font-family:'Liberation Sans', sans-serif;font-size:22px;font-weight:400;color:#6d7077;line-height:22px;font-style:normal;transform:scaleX(0.9460);transform-origin:center top;">Feb 5</span><span class="a t" style="left:1389.12px;top:1800.17px;font-family:'Liberation Sans', sans-serif;font-size:22px;font-weight:400;color:#6d7077;line-height:22px;font-style:normal;transform:scaleX(0.9460);transform-origin:center top;">Feb 7</span><span class="a t" style="left:1471.82px;top:1800.17px;font-family:'Liberation Sans', sans-serif;font-size:22px;font-weight:400;color:#6d7077;line-height:22px;font-style:normal;transform:scaleX(0.9460);transform-origin:center top;">Feb 9</span><span class="a t" style="left:1549.22px;top:1800.17px;font-family:'Liberation Sans', sans-serif;font-size:22px;font-weight:400;color:#6d7077;line-height:22px;font-style:normal;transform:scaleX(0.9460);transform-origin:center top;">Feb 11</span><span class="a t" style="left:1631.10px;top:1800.17px;font-family:'Liberation Sans', sans-serif;font-size:22px;font-weight:400;color:#6d7077;line-height:22px;font-style:normal;transform:scaleX(0.9460);transform-origin:center top;">Feb 13</span><span class="a t" style="left:1713.80px;top:1800.17px;font-family:'Liberation Sans', sans-serif;font-size:22px;font-weight:400;color:#6d7077;line-height:22px;font-style:normal;transform:scaleX(0.9460);transform-origin:center top;">Feb 15</span><span class="a t" style="left:1796.50px;top:1800.17px;font-family:'Liberation Sans', sans-serif;font-size:22px;font-weight:400;color:#6d7077;line-height:22px;font-style:normal;transform:scaleX(0.9460);transform-origin:center top;">Feb 17</span><span class="a t" style="left:1879.20px;top:1800.17px;font-family:'Liberation Sans', sans-serif;font-size:22px;font-weight:400;color:#6d7077;line-height:22px;font-style:normal;transform:scaleX(0.9460);transform-origin:center top;">Feb 19</span><span class="a t" style="left:1961.90px;top:1800.17px;font-family:'Liberation Sans', sans-serif;font-size:22px;font-weight:400;color:#6d7077;line-height:22px;font-style:normal;transform:scaleX(0.9460);transform-origin:center top;">Feb 21</span><span class="a t" style="left:691.60px;top:1884.67px;font-family:'Liberation Sans', sans-serif;font-size:22px;font-weight:400;color:#13b67d;line-height:22px;font-style:normal;transform:scaleX(0.9423);transform-origin:left top;">Licensed</span><span class="a t" style="left:824.70px;top:1884.67px;font-family:'Liberation Sans', sans-serif;font-size:22px;font-weight:400;color:#9aa0ab;line-height:22px;font-style:normal;transform:scaleX(0.9647);transform-origin:left top;">Unlicensed</span><span class="a t" style="left:2202.60px;top:1251.60px;font-family:'Liberation Sans', sans-serif;font-size:30px;font-weight:700;color:#141a24;line-height:30px;font-style:normal;transform:scaleX(0.9144);transform-origin:left top;">Top AI Models</span><span class="a t" style="left:2259.50px;top:1323.79px;font-family:'Liberation Sans', sans-serif;font-size:26px;font-weight:700;color:#2b3a52;line-height:26px;font-style:normal;transform:scaleX(0.9574);transform-origin:left top;">ChatGPT</span><span class="a t" style="left:2380.00px;top:1327.07px;font-family:'Liberation Sans', sans-serif;font-size:20px;font-weight:700;color:#6d7077;line-height:20px;font-style:normal;transform:scaleX(0.9156);transform-origin:left top;">Unlicensed</span><span class="a t" style="left:2259.50px;top:1359.38px;font-family:'Liberation Sans', sans-serif;font-size:24px;font-weight:400;color:#6d7077;line-height:24px;font-style:normal;transform:scaleX(0.8602);transform-origin:left top;">9 users</span><span class="a t" style="left:2752.80px;top:1338.99px;font-family:'Liberation Sans', sans-serif;font-size:28px;font-weight:700;color:#2b3a52;line-height:28px;font-style:normal;transform:scaleX(0.9119);transform-origin:right top;">7.4k</span><span class="a t" style="left:2259.50px;top:1428.69px;font-family:'Liberation Sans', sans-serif;font-size:26px;font-weight:700;color:#2b3a52;line-height:26px;font-style:normal;transform:scaleX(0.9684);transform-origin:left top;">Microsoft Copilot</span><span class="a t" style="left:2480.50px;top:1431.97px;font-family:'Liberation Sans', sans-serif;font-size:20px;font-weight:700;color:#13b67d;line-height:20px;font-style:normal;transform:scaleX(0.8881);transform-origin:left top;">Licensed</span><span class="a t" style="left:2259.50px;top:1464.28px;font-family:'Liberation Sans', sans-serif;font-size:24px;font-weight:400;color:#6d7077;line-height:24px;font-style:normal;transform:scaleX(0.8602);transform-origin:left top;">5 users</span><span class="a t" style="left:2752.80px;top:1443.89px;font-family:'Liberation Sans', sans-serif;font-size:28px;font-weight:700;color:#2b3a52;line-height:28px;font-style:normal;transform:scaleX(0.8936);transform-origin:right top;">1.7k</span><span class="a t" style="left:2259.50px;top:1533.59px;font-family:'Liberation Sans', sans-serif;font-size:26px;font-weight:700;color:#2b3a52;line-height:26px;font-style:normal;transform:scaleX(0.9417);transform-origin:left top;">Gemini</span><span class="a t" style="left:2356.50px;top:1536.87px;font-family:'Liberation Sans', sans-serif;font-size:20px;font-weight:700;color:#6d7077;line-height:20px;font-style:normal;transform:scaleX(0.9091);transform-origin:left top;">Unlicensed</span><span class="a t" style="left:2259.50px;top:1569.18px;font-family:'Liberation Sans', sans-serif;font-size:24px;font-weight:400;color:#6d7077;line-height:24px;font-style:normal;transform:scaleX(0.8602);transform-origin:left top;">4 users</span><span class="a t" style="left:2760.58px;top:1548.79px;font-family:'Liberation Sans', sans-serif;font-size:28px;font-weight:700;color:#2b3a52;line-height:28px;font-style:normal;transform:scaleX(0.9546);transform-origin:right top;">474</span><span class="a t" style="left:2259.50px;top:1638.49px;font-family:'Liberation Sans', sans-serif;font-size:26px;font-weight:700;color:#2b3a52;line-height:26px;font-style:normal;transform:scaleX(0.9459);transform-origin:left top;">Claude</span><span class="a t" style="left:2355.50px;top:1641.77px;font-family:'Liberation Sans', sans-serif;font-size:20px;font-weight:700;color:#6d7077;line-height:20px;font-style:normal;transform:scaleX(0.9063);transform-origin:left top;">Unlicensed</span><span class="a t" style="left:2259.50px;top:1674.08px;font-family:'Liberation Sans', sans-serif;font-size:24px;font-weight:400;color:#6d7077;line-height:24px;font-style:normal;transform:scaleX(0.8602);transform-origin:left top;">2 users</span><span class="a t" style="left:2760.58px;top:1653.69px;font-family:'Liberation Sans', sans-serif;font-size:28px;font-weight:700;color:#2b3a52;line-height:28px;font-style:normal;transform:scaleX(0.9546);transform-origin:right top;">235</span>
</body></html>
